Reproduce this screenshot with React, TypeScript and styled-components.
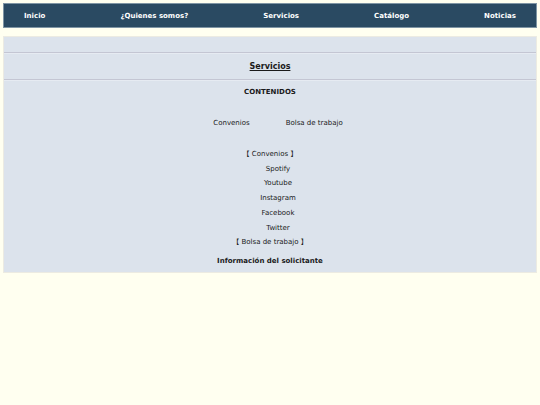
import React from "react";
import styled, { createGlobalStyle } from "styled-components";

const GlobalStyle = createGlobalStyle`
  html, body {
    margin: 0;
    padding: 0;
    background: #fffff0;
  }

  body {
    padding: 3px;
    font-family: "DejaVu Sans", Verdana, "Noto Sans CJK JP", sans-serif;
    font-size: 7px;
    color: #1a1a1a;
  }
`;

const menu = ["Inicio", "¿Quienes somos?", "Servicios", "Catálogo", "Noticias"];
const convenios = ["Spotify", "Youtube", "Instagram", "Facebook", "Twitter"];

const App = () => {
  return (
    <>
      <GlobalStyle />
      <NavBar>
        {menu.map((item) => (
          <NavLink key={item}>{item}</NavLink>
        ))}
      </NavBar>

      <Main>
        <Rule />
        <Title>Servicios</Title>
        <Rule />
        <Label>CONTENIDOS</Label>

        <TabRow>
          <Tab>Convenios</Tab>
          <Tab>Bolsa de trabajo</Tab>
        </TabRow>

        <List>
          <Section>【 Convenios 】</Section>
          {convenios.map((item) => (
            <Item key={item}>{item}</Item>
          ))}
          <Section>【 Bolsa de trabajo 】</Section>
        </List>

        <Label>Información del solicitante</Label>
      </Main>
    </>
  );
};

export default App;

const NavBar = styled.nav`
  display: flex;
  align-items: center;
  justify-content: space-between;
  height: 25px;
  padding: 0 20px;
  box-sizing: border-box;
  background: #2a4a62;
  border: 1px solid #7f95a4;
`;

const NavLink = styled.span`
  color: #ffffff;
  font-weight: bold;
  font-size: 7px;
  line-height: 1;
  padding-top: 2px;
`;

const Main = styled.main`
  margin-top: 8px;
  padding: 15px 0 5px;
  background: #dce3ec;
  border: 1px solid #ecebe2;
  text-align: center;
`;

const Rule = styled.div`
  height: 0;
  border-top: 1px solid #c4c6d3;
  border-bottom: 1px solid #e6ebf2;
`;

const Title = styled.h2`
  margin: 0;
  padding-top: 1px;
  font-size: 8px;
  font-weight: bold;
  line-height: 24px;
  text-decoration: underline;
`;

const Label = styled.div`
  font-weight: bold;
  line-height: 12px;
  margin-top: 5px;
`;

const TabRow = styled.div`
  display: flex;
  justify-content: center;
  gap: 36px;
  margin-top: 19px;
  padding-left: 16px;
  line-height: 12px;
`;

const Tab = styled.span`
  color: #1a1a1a;
`;

const List = styled.div`
  margin-top: 18px;
  line-height: 14.7px;
`;

const Section = styled.div`
  font-family: "DejaVu Sans", "Noto Sans CJK JP", sans-serif;
`;

const Item = styled.div`
  padding-left: 16px;
`;
